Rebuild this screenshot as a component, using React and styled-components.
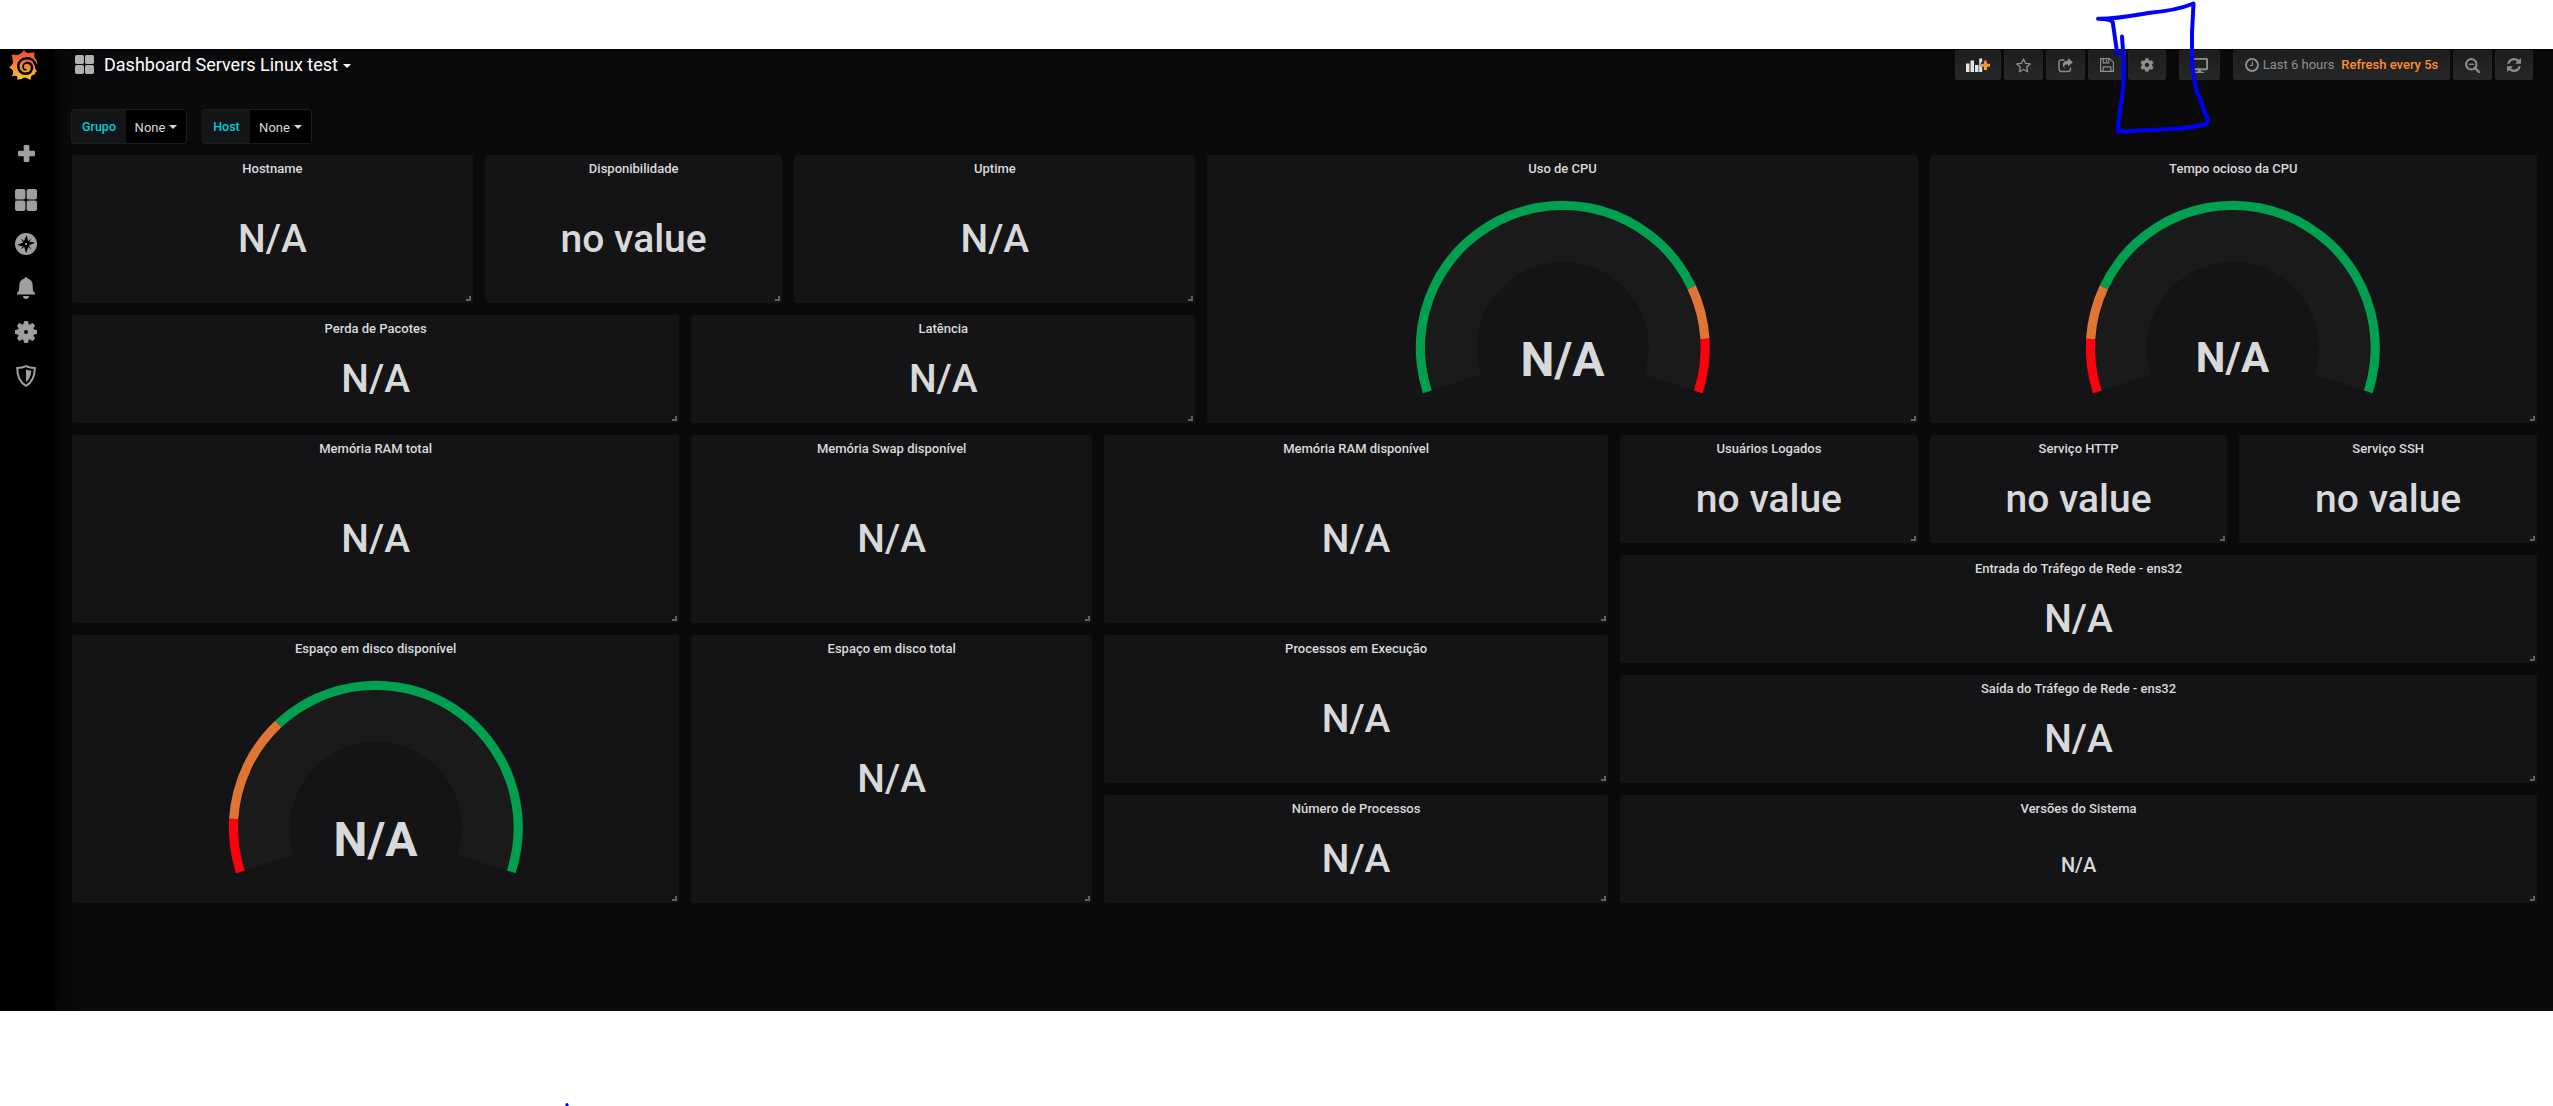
import React from "react";
import styled, { createGlobalStyle } from "styled-components";
import { FaCog, FaDesktop } from "react-icons/fa";

const Global = createGlobalStyle`
  body { margin: 0; background: #fff; }
  *, *::after { box-sizing: border-box; }
`;

const Page = styled.div`
  position: relative;
  width: 2553px;
  height: 1106px;
  padding-top: 49px;
  overflow: hidden;
  font-family: Roboto, "Liberation Sans", sans-serif;
`;

const Shell = styled.div`
  display: flex;
  height: 962px;
  overflow: hidden;
  background: #0a0a0c;
  color: #d8d9da;
`;

const Sidebar = styled.nav`
  width: 55px;
  flex: none;
  background: #000;
  box-shadow: 0 0 20px #000;
  display: flex;
  flex-direction: column;
  align-items: center;
  padding-right: 3px;
`;

const Logo = styled.svg`
  width: 30px;
  height: 32px;
  margin: 0 4px 49px 0;
  display: block;
  flex: none;
`;

const SideItem = styled.div`
  height: ${(p) => p.$h ?? 44}px;
  display: flex;
  align-items: center;
  justify-content: center;
  color: #9e9fa0;
  svg { display: block; }
`;

const PlusItem = styled(SideItem)`
  height: 48px;
  padding-bottom: 2px;
`;

const Main = styled.main`
  flex: 1;
  padding: 0 16px 0 17px;
`;

const TopBar = styled.header`
  height: 60px;
  display: flex;
  align-items: flex-start;
  justify-content: space-between;
`;

const Title = styled.h1`
  margin: 0;
  padding-left: 3px;
  height: 31px;
  display: flex;
  align-items: center;
  gap: 10px;
  font-size: 18px;
  font-weight: 400;
  color: #fff;
`;

const Caret = styled.i`
  display: inline-block;
  border: solid transparent;
  border-width: ${(p) => p.$s}px ${(p) => p.$s}px 0;
  border-top-color: currentColor;
  margin-left: ${(p) => p.$gap}px;
  vertical-align: middle;
`;

const Tools = styled.div`
  display: flex;
  padding: 1px 4px 0 0;
`;

const Tool = styled.div`
  width: ${(p) => p.$w}px;
  height: 30px;
  margin-left: ${(p) => p.$gap ?? 3}px;
  border: 1px solid #252628;
  border-radius: 2px;
  background: linear-gradient(180deg, #1c1d1f, #262729);
  color: #8e8e8e;
  display: flex;
  align-items: center;
  justify-content: center;
  font-size: 13px;
  font-weight: 500;
  white-space: nowrap;
  svg { display: block; flex: none; }
`;

const Range = styled.span`
  margin: 0 7px 0 4px;
  padding-bottom: 1px;
  font-weight: 400;
`;

const Refresh = styled.span`
  padding-bottom: 1px;
  color: #ff8b2e;
`;

const Variables = styled.div`
  display: flex;
  gap: 16px;
  height: 46px;
`;

const Variable = styled.div`
  display: flex;
  height: 35px;
  width: ${(p) => p.$w}px;
  margin-left: -1px;
  border: 1px solid #1c1d1f;
  border-radius: 3px;
  overflow: hidden;
`;

const VarName = styled.label`
  width: ${(p) => p.$w}px;
  display: flex;
  align-items: center;
  justify-content: center;
  background: #141517;
  color: #00ccd8;
  font-size: 12.5px;
  font-weight: 500;
`;

const VarValue = styled.div`
  flex: 1;
  display: flex;
  align-items: center;
  justify-content: center;
  padding-top: 1px;
  background: #000;
  font-size: 13px;
`;

const Grid = styled.section`
  display: grid;
  grid-template-columns: repeat(24, minmax(0, 1fr));
  grid-auto-rows: 28px;
  gap: 12px;
`;

const Panel = styled.article`
  position: relative;
  grid-column: ${(p) => p.$x + 1} / span ${(p) => p.$w};
  grid-row: ${(p) => p.$y + 1} / span ${(p) => p.$h};
  background: #141416;
  border-radius: 3px;
  display: flex;
  flex-direction: column;
  min-width: 0;

  &::after {
    content: "";
    position: absolute;
    right: 2px;
    bottom: 2px;
    width: 5px;
    height: 5px;
    border: solid #606163;
    border-width: 0 2px 2px 0;
  }
`;

const PanelTitle = styled.h2`
  margin: 0;
  height: 29px;
  line-height: 27px;
  text-align: center;
  font-size: 13px;
  font-weight: 500;
`;

const Stat = styled.div`
  flex: 1;
  display: flex;
  align-items: center;
  justify-content: center;
  padding: ${(p) => (p.$small ? "3px 0 0" : "0 0 9px")};
  font-size: ${(p) => (p.$small ? 20 : 39)}px;
  font-weight: 500;
`;

const GaugeSvg = styled.svg`
  display: block;
  width: 300px;
  height: 239px;
  margin: 0 auto;
  text {
    font-family: Roboto, "Liberation Sans", sans-serif;
    font-weight: 700;
    fill: #d8d9da;
    text-anchor: middle;
  }
`;

const Ink = styled.svg`
  position: absolute;
  inset: 0;
  width: 100%;
  height: 100%;
  pointer-events: none;
`;

const START = -198;
const SWEEP = 216;

const ring = (r1, r2, from, to) => {
  const pt = (r, f) => {
    const a = ((START + SWEEP * f) * Math.PI) / 180;
    return `${(149.8 + r * Math.cos(a)).toFixed(2)} ${(163.8 + r * Math.sin(a)).toFixed(2)}`;
  };
  const large = (to - from) * SWEEP > 180 ? 1 : 0;
  return `M${pt(r2, from)}A${r2} ${r2} 0 ${large} 1 ${pt(r2, to)}L${pt(r1, to)}A${r1} ${r1} 0 ${large} 0 ${pt(r1, from)}Z`;
};

function Gauge({ stops, size, baseline }) {
  return (
    <GaugeSvg viewBox="0 0 300 239">
      <path d={ring(86, 137, 0, 1)} fill="#1a1a1a" />
      {stops.map(([from, to, color]) => (
        <path key={from} d={ring(137.8, 147, from, to)} fill={color} />
      ))}
      <text x="149.500" y={baseline} fontSize={size}>N/A</text>
    </GaugeSvg>
  );
}

const GREEN = "#019f50";
const ORANGE = "#e07434";
const RED = "#ff000e";

const PlusIcon = () => (
  <svg width="17" height="17" viewBox="0 0 17 17" fill="currentColor">
    <rect x="5.700" width="5.600" height="17" rx="1.200" />
    <rect y="5.700" width="17" height="5.600" rx="1.200" />
  </svg>
);

const GridIcon = ({ size, color = "currentColor" }) => (
  <svg width={size} height={size} viewBox="0 0 22 22" fill={color}>
    <rect width="10.400" height="10.400" rx="2" />
    <rect x="11.600" width="10.400" height="10.400" rx="2" />
    <rect y="11.600" width="10.400" height="10.400" rx="2" />
    <rect x="11.600" y="11.600" width="10.400" height="10.400" rx="2" />
  </svg>
);

const CompassIcon = () => (
  <svg width="22" height="22" viewBox="0 0 22 22">
    <circle cx="11" cy="11" r="11" fill="currentColor" />
    <path d="M11.800 2L13 8.200L20 9.800L14 12.600L11 20L9.200 13.800L2 12L8.200 9.400z" fill="#000" />
    <path d="M5.500 5.500L11 9.500L16.500 5.500L12.500 11L16.500 16.500L11 12.500L5.500 16.500L9.500 11z" fill="#000" />
    <circle cx="11" cy="11" r="1.100" fill="currentColor" />
  </svg>
);

const GearIcon = () => {
  const teeth = [0, 45, 90, 135, 180, 225, 270, 315];
  return (
    <svg width="22" height="22" viewBox="-11 -11 22 22" fill="currentColor">
      {teeth.map((a) => (
        <path key={a} transform={`rotate(${a})`} d="M-3-7L-1.700-11H1.700L3-7z" />
      ))}
      <path fillRule="evenodd" d="M-8 0a8 8 0 1 0 16 0a8 8 0 1 0-16 0M-2 0a2 2 0 1 1 4 0a2 2 0 1 1-4 0" />
    </svg>
  );
};

const BellIcon = () => (
  <svg width="18" height="22" viewBox="0 0 18 22" fill="currentColor">
    <path d="M7.500 1.500a1.500 1.500 0 0 1 3 0c3.500.8 5.200 3.400 5.200 7 0 4.500.6 6 2.300 7.700v1.300H0v-1.300c1.700-1.700 2.300-3.200 2.300-7.700 0-3.600 1.700-6.200 5.200-7zM6 19h6c0 1.900-1.200 3-3 3s-3-1.100-3-3z" />
  </svg>
);

const ShieldIcon = () => (
  <svg width="20" height="22" viewBox="0 0 20 22">
    <path d="M10 1.200C7.500 2.500 4.500 3 1.200 3c0 8 2 14 8.800 17.800C16.800 17 18.800 11 18.800 3 15.500 3 12.500 2.500 10 1.200z" fill="none" stroke="currentColor" strokeWidth="2" />
    <path d="M10 4.600c1.800.7 3.500 1 5.300 1.200-.3 4.600-1.600 8.300-5.300 11.400z" fill="currentColor" />
  </svg>
);

const AddPanelIcon = () => (
  <svg width="24" height="16" viewBox="0 0 24 16">
    <defs>
      <linearGradient id="plus" x1="0" y1="0" x2="0" y2="1">
        <stop offset="0" stopColor="#f5714a" />
        <stop offset="1" stopColor="#fbb32c" />
      </linearGradient>
    </defs>
    <path d="M0 6.500h3.500V15H0zM4.500 3.500H8V15H4.500zM9 8h3.500v7H9zM13.200 1.500h3v3.800h-1.500v4.500h1.500V15h-3z" fill="#e3e4e5" />
    <path d="M17.900 3.500h3v3.300h3.100v3h-3.100V13h-3V9.800H15v-3h2.900z" fill="url(#plus)" />
  </svg>
);

const StarIcon = () => (
  <svg width="15" height="15" viewBox="0 0 15 15" fill="none" stroke="currentColor" strokeWidth="1.300" strokeLinejoin="round">
    <path d="M7.500 1l2 4.300 4.700.6-3.500 3.200.9 4.700-4.100-2.300-4.100 2.300.9-4.700L.8 5.900l4.700-.6z" />
  </svg>
);

const ShareIcon = () => (
  <svg width="15" height="15" viewBox="0 0 15 15" fill="none" stroke="currentColor">
    <path d="M6.500 2H3.400Q1 2 1 4.400v6.700q0 2.400 2.400 2.400h6.700q2.400 0 2.400-2.400V9.500" strokeWidth="1.400" />
    <path d="M10 0l5 4.300-5 4.300V6.300C6.800 6.300 5.800 7.500 6.600 10.700 3.300 7 4.800 2.600 10 2.500z" fill="currentColor" stroke="none" />
  </svg>
);

const SaveIcon = () => (
  <svg width="14" height="14" viewBox="0 0 14 14" fill="none" stroke="currentColor" strokeWidth="1.200">
    <path d="M.6.600h9L13.400 4.400v9H.6zM3.200 13.400V8.800h7.600v4.600M3.200.600v4.200h5.600V.600" />
    <path d="M6.500 1.500v2.300" />
  </svg>
);

const ClockIcon = () => (
  <svg width="14" height="14" viewBox="0 0 14 14" fill="none" stroke="currentColor">
    <circle cx="7" cy="7" r="6" strokeWidth="1.900" />
    <path d="M7.400 3.500v4H4.600" strokeWidth="1.200" />
  </svg>
);

const ZoomOutIcon = () => (
  <svg width="15" height="15" viewBox="0 0 15 15" fill="none" stroke="currentColor" strokeWidth="2">
    <circle cx="6.300" cy="6.300" r="5.200" />
    <path d="M10 10l4 4" strokeWidth="2.400" strokeLinecap="round" />
    <path d="M3.700 6.300h5.200" strokeWidth="1.300" />
  </svg>
);

const RefreshIcon = () => (
  <svg width="14" height="14" viewBox="0 0 1536 1536" fill="currentColor">
    <path d="M1511 928q0 5-1 7-64 268-268 434.500T764 1536q-146 0-282.500-55T238 1324l-129 129q-19 19-45 19t-45-19-19-45V960q0-26 19-45t45-19h448q26 0 45 19t19 45-19 45l-137 137q71 66 161 102t187 36q134 0 250-65t186-179q11-17 53-117 8-23 30-23h192q13 0 22.500 9.500t9.500 22.500zm25-800v448q0 26-19 45t-45 19h-448q-26 0-45-19t-19-45 19-45l138-138Q969 256 768 256q-134 0-250 65T332 500q-11 17-53 117-8 23-30 23H50q-13 0-22.500-9.500T18 608v-7q65-268 270-434.500T768 0q146 0 284 55.500T1297 212l130-129q19-19 45-19t45 19 19 45z" />
  </svg>
);

const GrafanaLogo = () => (
  <Logo viewBox="0 -1 30 32">
    <defs>
      <linearGradient id="flame" x1="0" y1="0" x2="0" y2="1">
        <stop offset="0" stopColor="#f0472b" />
        <stop offset="0.500" stopColor="#f5813a" />
        <stop offset="1" stopColor="#fcc82e" />
      </linearGradient>
    </defs>
    <path fill="url(#flame)" d="M15 0Q16 2.500 19 3.300Q22 2 25.800 2.600Q24.500 5 25.600 7.500Q28 9.500 28.500 14L26 14.500V18.500L28 21Q26 22 25.700 24.500Q23 24.500 22 26.500L21.500 30Q18.500 27.700 15 27.500Q12.500 29.800 8 29.500Q8.800 27.500 8 26Q6 25.500 3 26.300Q4.800 23 4 20.500Q2.500 18.500 0 17.700Q3.300 15.500 4 12.500Q3.800 8.500 2.700 4.600Q6.500 5.500 9.500 4.700Q13 3 15 0Z" />
    <path fill="none" stroke="#000" strokeWidth="2.600" strokeLinecap="round" d="M26.500 14.500C25 10.500 22 8.300 18 8.300C12.500 8.300 9.300 12 9.300 16.300C9.300 20.800 12.800 23.800 16.600 23.800C20.600 23.800 23 21 23 17.600C23 14.600 20.800 12.800 18.300 12.800" />
    <path fill="none" stroke="#000" strokeWidth="1.600" strokeLinecap="round" d="M18.300 12.800C15.800 12.800 14 14.500 14 16.700C14 18.600 15.300 19.800 17 19.800" />
  </Logo>
);

const panels = [
  { t: "Hostname", x: 0, y: 0, w: 4, h: 4 },
  { t: "Disponibilidade", x: 4, y: 0, w: 3, h: 4, v: "no value" },
  { t: "Uptime", x: 7, y: 0, w: 4, h: 4 },
  { t: "Uso de CPU", x: 11, y: 0, w: 7, h: 7, g: { size: 48, baseline: 192, stops: [[0, 0.8, GREEN], [0.8, 0.9, ORANGE], [0.9, 1, RED]] } },
  { t: "Tempo ocioso da CPU", x: 18, y: 0, w: 6, h: 7, g: { size: 42, baseline: 188, stops: [[0, 0.1, RED], [0.1, 0.2, ORANGE], [0.2, 1, GREEN]] } },
  { t: "Perda de Pacotes", x: 0, y: 4, w: 6, h: 3 },
  { t: "Latência", x: 6, y: 4, w: 5, h: 3 },
  { t: "Memória RAM total", x: 0, y: 7, w: 6, h: 5 },
  { t: "Memória Swap disponível", x: 6, y: 7, w: 4, h: 5 },
  { t: "Memória RAM disponível", x: 10, y: 7, w: 5, h: 5 },
  { t: "Usuários Logados", x: 15, y: 7, w: 3, h: 3, v: "no value" },
  { t: "Serviço HTTP", x: 18, y: 7, w: 3, h: 3, v: "no value" },
  { t: "Serviço SSH", x: 21, y: 7, w: 3, h: 3, v: "no value" },
  { t: "Entrada do Tráfego de Rede - ens32", x: 15, y: 10, w: 9, h: 3 },
  { t: "Espaço em disco disponível", x: 0, y: 12, w: 6, h: 7, g: { size: 48, baseline: 192, stops: [[0, 0.1, RED], [0.1, 0.3, ORANGE], [0.3, 1, GREEN]] } },
  { t: "Espaço em disco total", x: 6, y: 12, w: 4, h: 7 },
  { t: "Processos em Execução", x: 10, y: 12, w: 5, h: 4 },
  { t: "Saída do Tráfego de Rede - ens32", x: 15, y: 13, w: 9, h: 3 },
  { t: "Número de Processos", x: 10, y: 16, w: 5, h: 3 },
  { t: "Versões do Sistema", x: 15, y: 16, w: 9, h: 3, small: true },
];

export default function App() {
  return (
    <Page>
      <Global />
      <Shell>
        <Sidebar>
          <GrafanaLogo />
          <PlusItem><PlusIcon /></PlusItem>
          <SideItem><GridIcon size={22} /></SideItem>
          <SideItem><CompassIcon /></SideItem>
          <SideItem><BellIcon /></SideItem>
          <SideItem><GearIcon /></SideItem>
          <SideItem><ShieldIcon /></SideItem>
        </Sidebar>
        <Main>
          <TopBar>
            <Title>
              <GridIcon size={19} color="#b0b0b0" />
              <span>Dashboard Servers Linux test<Caret $s={4} $gap={5} /></span>
            </Title>
            <Tools>
              <Tool $w={46}><AddPanelIcon /></Tool>
              <Tool $w={39}><StarIcon /></Tool>
              <Tool $w={39}><ShareIcon /></Tool>
              <Tool $w={38}><SaveIcon /></Tool>
              <Tool $w={38} $gap={2}><FaCog size={14} /></Tool>
              <Tool $w={41} $gap={13}><FaDesktop size={17} /></Tool>
              <Tool $w={217} $gap={13}>
                <ClockIcon />
                <Range>Last 6 hours</Range>
                <Refresh>Refresh every 5s</Refresh>
              </Tool>
              <Tool $w={39}><ZoomOutIcon /></Tool>
              <Tool $w={38}><RefreshIcon /></Tool>
            </Tools>
          </TopBar>
          <Variables>
            <Variable $w={116}>
              <VarName $w={54}>Grupo</VarName>
              <VarValue>None<Caret $s={4} $gap={4} /></VarValue>
            </Variable>
            <Variable $w={110}>
              <VarName $w={47}>Host</VarName>
              <VarValue>None<Caret $s={4} $gap={4} /></VarValue>
            </Variable>
          </Variables>
          <Grid>
            {panels.map((p) => (
              <Panel key={p.t} $x={p.x} $y={p.y} $w={p.w} $h={p.h}>
                <PanelTitle>{p.t}</PanelTitle>
                {p.g ? <Gauge {...p.g} /> : <Stat $small={p.small}>{p.v ?? "N/A"}</Stat>}
              </Panel>
            ))}
          </Grid>
        </Main>
      </Shell>
      <Ink viewBox="0 0 2553 1106" fill="none" stroke="#0000ff" strokeWidth="4" strokeLinecap="round" strokeLinejoin="round">
        <path d="M2117.300 54L2112.700 22Q2111 19 2098 18.700C2120 19 2135 15 2150 12.700C2165 11.500 2180 9 2193.500 3.500L2192 33V53Q2192 66 2194 78L2197 93L2200 98L2204 111L2207.500 117Q2208 121 2206.500 124Q2195 127 2180 128.500L2118.300 131.700V125L2120.700 105L2123 90Q2124.500 65 2122 36.500" />
        <path d="M567 1104.500V1107" strokeWidth="3" />
      </Ink>
    </Page>
  );
}
